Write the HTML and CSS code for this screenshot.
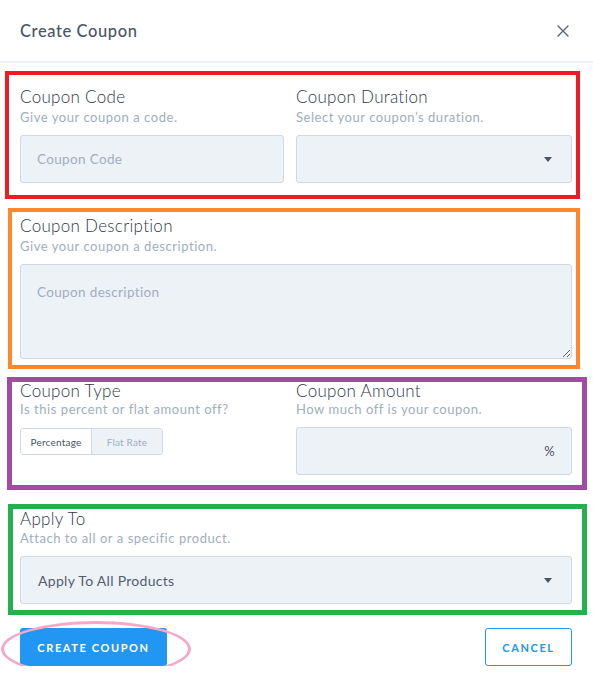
FILE: index.html
```html
<!DOCTYPE html>
<html lang="en">
<head>
<meta charset="utf-8">
<title>Create Coupon</title>
<link rel="stylesheet" href="styles.css">
</head>
<body>
<div class="modal">
  <header class="modal-header">
    <h1 class="modal-title">Create Coupon</h1>
    <button class="close-btn" aria-label="Close">
      <svg width="12" height="12" viewBox="0 0 12 12"><path d="M1 1L11 11M11 1L1 11" stroke="#5a6478" stroke-width="1.4" fill="none" stroke-linecap="round"/></svg>
    </button>
  </header>

  <div class="modal-body">
    <section class="group group-red">
      <div class="cols">
        <div class="field">
          <div class="label">Coupon Code</div>
          <div class="help">Give your coupon a code.</div>
          <input class="input" type="text" placeholder="Coupon Code">
        </div>
        <div class="field">
          <div class="label">Coupon Duration</div>
          <div class="help">Select your coupon’s duration.</div>
          <div class="select"><span class="select-text"></span><span class="caret"></span></div>
        </div>
      </div>
    </section>

    <section class="group group-orange">
      <div class="field">
        <div class="label">Coupon Description</div>
        <div class="help">Give your coupon a description.</div>
        <textarea class="textarea" placeholder="Coupon description"></textarea>
      </div>
    </section>

    <section class="group group-purple">
      <div class="cols">
        <div class="field">
          <div class="label">Coupon Type</div>
          <div class="help">Is this percent or flat amount off?</div>
          <div class="toggle">
            <span class="toggle-opt active">Percentage</span>
            <span class="toggle-opt">Flat Rate</span>
          </div>
        </div>
        <div class="field">
          <div class="label">Coupon Amount</div>
          <div class="help">How much off is your coupon.</div>
          <div class="input input-suffix"><span></span><span class="suffix">%</span></div>
        </div>
      </div>
    </section>

    <section class="group group-green">
      <div class="field">
        <div class="label">Apply To</div>
        <div class="help">Attach to all or a specific product.</div>
        <div class="select"><span class="select-text">Apply To All Products</span><span class="caret"></span></div>
      </div>
    </section>
  </div>

  <footer class="modal-footer">
    <div class="primary-wrap">
      <button class="btn btn-primary">CREATE COUPON</button>
      <span class="highlight-ellipse"></span>
    </div>
    <button class="btn btn-outline">CANCEL</button>
  </footer>
</div>
</body>
</html>
```

FILE: styles.css
```css
* { box-sizing: border-box; }

html, body {
  margin: 0;
  padding: 0;
  background: #ffffff;
}

body {
  font-family: Lato, "Open Sans", "Liberation Sans", sans-serif;
  color: #4a5568;
}

.modal {
  width: 593px;
  background: #fff;
}

.modal-header {
  height: 63px;
  display: flex;
  align-items: center;
  justify-content: space-between;
  padding: 0 20px 0 20px;
  border-bottom: 2px solid #edf2f7;
}

.modal-title {
  margin: 0;
  font-size: 16.5px;
  font-weight: 500;
  color: #4a5568;
  letter-spacing: 0.6px;
  padding-top: 1px;
}

.close-btn {
  border: 0;
  background: transparent;
  padding: 0;
  width: 14px;
  height: 14px;
  display: flex;
  align-items: center;
  justify-content: center;
  margin-right: 3px;
}

.modal-body {
  display: flex;
  flex-direction: column;
}

.group {
  border-style: solid;
}

.group-red {
  margin: 8px 0 0 5px;
  width: 575px;
  border-width: 4px;
  border-color: #ed1c24;
  padding: 11px 4px 12px 11px;
}

.group-orange {
  margin: 9px 0 0 8px;
  width: 572px;
  border-width: 4px;
  border-color: #ff8629;
  padding: 3px 4px 6px 8px;
}

.group-purple {
  margin: 8px 0 0 7px;
  width: 580px;
  border-width: 5px;
  border-color: #a34aa3;
  padding: 0 10px 10px 8px;
}

.group-purple .label {
  line-height: 18px;
}

.group-green {
  margin: 14px 0 0 8px;
  width: 579px;
  border-width: 5px;
  border-color: #22b14c;
  padding: 0 10px 6px 7px;
}

.group-green .label {
  line-height: 20px;
}

.cols {
  display: grid;
  grid-template-columns: 264px 1fr;
  column-gap: 12px;
}

.field {
  display: flex;
  flex-direction: column;
  align-items: stretch;
}

.label {
  font-size: 17px;
  line-height: 22px;
  font-weight: 300;
  color: #2f3746;
  letter-spacing: 0.3px;
}

.help {
  font-size: 13px;
  line-height: 18px;
  color: #a0aec0;
  letter-spacing: 0.55px;
  margin-bottom: 9px;
}

.input,
.select,
.textarea {
  height: 48px;
  background: #edf2f7;
  border: 1px solid #cfd8e3;
  border-radius: 3px;
  font-family: inherit;
  font-size: 13.5px;
  letter-spacing: 0.35px;
  color: #4a5568;
  outline: none;
}

.input {
  padding: 0 16px;
}

input.input::placeholder,
.textarea::placeholder {
  color: #a0aec0;
  opacity: 1;
}

.textarea {
  display: block;
  height: 95px;
  padding: 19px 16px;
  resize: vertical;
  margin: 0;
}

.select {
  display: flex;
  align-items: center;
  justify-content: space-between;
  padding: 0 19px 0 17px;
}

.select-text {
  font-size: 14px;
  font-weight: 400;
  color: #525d70;
  letter-spacing: 0.3px;
}

.caret {
  width: 0;
  height: 0;
  border-left: 4.5px solid transparent;
  border-right: 4.5px solid transparent;
  border-top: 5px solid #4a5568;
  margin-top: 1px;
}

.input-suffix {
  display: flex;
  align-items: center;
  justify-content: space-between;
  padding: 0 16px 0 16px;
}

.suffix {
  font-size: 13px;
  color: #4a5568;
}

.toggle {
  display: flex;
  width: 143px;
  height: 27px;
  border: 1px solid #cfd8e3;
  border-radius: 3px;
  overflow: hidden;
  margin-top: 1px;
}

.toggle-opt {
  flex: 1 1 auto;
  display: flex;
  align-items: center;
  justify-content: center;
  font-size: 10px;
  letter-spacing: 0.2px;
  color: #a0aec0;
  background: #edf2f7;
}

.toggle-opt.active {
  flex: 0 0 71px;
  background: #fff;
  color: #4a5568;
  border-right: 1px solid #cfd8e3;
}

.modal-footer {
  display: flex;
  justify-content: space-between;
  align-items: center;
  padding: 13px 21px 0 20px;
}

.primary-wrap {
  position: relative;
  display: flex;
}

.btn {
  font-family: inherit;
  height: 38px;
  font-size: 11px;
  font-weight: 700;
  letter-spacing: 1.6px;
  border-radius: 3px;
  cursor: pointer;
}

.btn-primary {
  width: 147px;
  background: #2196f3;
  border: 0;
  color: #fff;
}

.btn-outline {
  width: 87px;
  background: #fff;
  border: 1px solid #2196f3;
  color: #2196f3;
}

.highlight-ellipse {
  position: absolute;
  left: -19px;
  top: -7px;
  width: 190px;
  height: 56px;
  border: 3px solid #f7a8c6;
  border-radius: 50%;
  pointer-events: none;
}
```
